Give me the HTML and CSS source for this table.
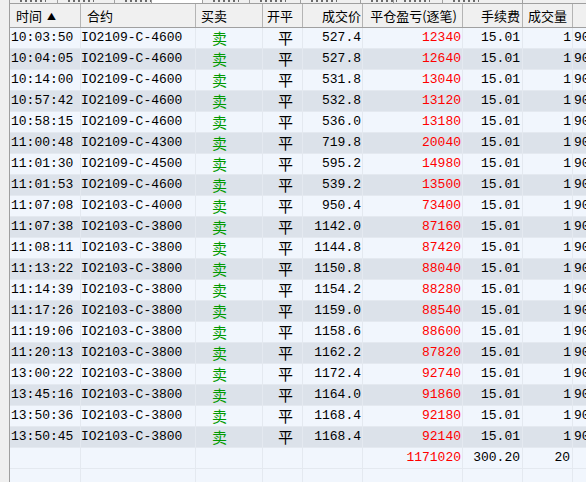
FILE: index.html
```html
<!DOCTYPE html>
<html lang="zh">
<head>
<meta charset="utf-8">
<title>成交</title>
<link rel="stylesheet" href="styles.css">
</head>
<body>
<div class="app">
  <div class="side"></div>
  <div class="main">
    <div class="tabs">
      <span class="tab w48"></span>
      <span class="tab w57"></span>
      <span class="tab w37"></span>
      <span class="tab w51 sel"></span>
      <span class="tab w47"></span>
      <span class="tab w51"></span>
      <span class="tab w60"></span>
      <span class="tab w33"></span>
      <span class="tab w49"></span>
      <span class="tab w80"></span>
    </div>
    <div class="grid">
      <div class="row head">
        <div class="c l p6">时间 <span class="sort">▲</span></div>
        <div class="c l p6">合约</div>
        <div class="c l p5">买卖</div>
        <div class="c l p4">开平</div>
        <div class="c r p1">成交价</div>
        <div class="c r p5">平仓盈亏(逐笔)</div>
        <div class="c r p2">手续费</div>
        <div class="c r p5">成交量</div>
        <div class="c l"></div>
      </div>

      <div class="row odd"><div class="c t">10:03:50</div><div class="c k">IO2109-C-4600</div><div class="c bs">卖</div><div class="c oc">平</div><div class="c n">527.4</div><div class="c n red">12340</div><div class="c n fee">15.01</div><div class="c n">1</div><div class="c x">9021</div></div>
      <div class="row even"><div class="c t">10:04:05</div><div class="c k">IO2109-C-4600</div><div class="c bs">卖</div><div class="c oc">平</div><div class="c n">527.8</div><div class="c n red">12640</div><div class="c n fee">15.01</div><div class="c n">1</div><div class="c x">9021</div></div>
      <div class="row odd"><div class="c t">10:14:00</div><div class="c k">IO2109-C-4600</div><div class="c bs">卖</div><div class="c oc">平</div><div class="c n">531.8</div><div class="c n red">13040</div><div class="c n fee">15.01</div><div class="c n">1</div><div class="c x">9021</div></div>
      <div class="row even"><div class="c t">10:57:42</div><div class="c k">IO2109-C-4600</div><div class="c bs">卖</div><div class="c oc">平</div><div class="c n">532.8</div><div class="c n red">13120</div><div class="c n fee">15.01</div><div class="c n">1</div><div class="c x">9021</div></div>
      <div class="row odd"><div class="c t">10:58:15</div><div class="c k">IO2109-C-4600</div><div class="c bs">卖</div><div class="c oc">平</div><div class="c n">536.0</div><div class="c n red">13180</div><div class="c n fee">15.01</div><div class="c n">1</div><div class="c x">9021</div></div>
      <div class="row even"><div class="c t">11:00:48</div><div class="c k">IO2109-C-4300</div><div class="c bs">卖</div><div class="c oc">平</div><div class="c n">719.8</div><div class="c n red">20040</div><div class="c n fee">15.01</div><div class="c n">1</div><div class="c x">9021</div></div>
      <div class="row odd"><div class="c t">11:01:30</div><div class="c k">IO2109-C-4500</div><div class="c bs">卖</div><div class="c oc">平</div><div class="c n">595.2</div><div class="c n red">14980</div><div class="c n fee">15.01</div><div class="c n">1</div><div class="c x">9021</div></div>
      <div class="row even"><div class="c t">11:01:53</div><div class="c k">IO2109-C-4600</div><div class="c bs">卖</div><div class="c oc">平</div><div class="c n">539.2</div><div class="c n red">13500</div><div class="c n fee">15.01</div><div class="c n">1</div><div class="c x">9021</div></div>
      <div class="row odd"><div class="c t">11:07:08</div><div class="c k">IO2103-C-4000</div><div class="c bs">卖</div><div class="c oc">平</div><div class="c n">950.4</div><div class="c n red">73400</div><div class="c n fee">15.01</div><div class="c n">1</div><div class="c x">9021</div></div>
      <div class="row even"><div class="c t">11:07:38</div><div class="c k">IO2103-C-3800</div><div class="c bs">卖</div><div class="c oc">平</div><div class="c n">1142.0</div><div class="c n red">87160</div><div class="c n fee">15.01</div><div class="c n">1</div><div class="c x">9021</div></div>
      <div class="row odd"><div class="c t">11:08:11</div><div class="c k">IO2103-C-3800</div><div class="c bs">卖</div><div class="c oc">平</div><div class="c n">1144.8</div><div class="c n red">87420</div><div class="c n fee">15.01</div><div class="c n">1</div><div class="c x">9021</div></div>
      <div class="row even"><div class="c t">11:13:22</div><div class="c k">IO2103-C-3800</div><div class="c bs">卖</div><div class="c oc">平</div><div class="c n">1150.8</div><div class="c n red">88040</div><div class="c n fee">15.01</div><div class="c n">1</div><div class="c x">9021</div></div>
      <div class="row odd"><div class="c t">11:14:39</div><div class="c k">IO2103-C-3800</div><div class="c bs">卖</div><div class="c oc">平</div><div class="c n">1154.2</div><div class="c n red">88280</div><div class="c n fee">15.01</div><div class="c n">1</div><div class="c x">9021</div></div>
      <div class="row even"><div class="c t">11:17:26</div><div class="c k">IO2103-C-3800</div><div class="c bs">卖</div><div class="c oc">平</div><div class="c n">1159.0</div><div class="c n red">88540</div><div class="c n fee">15.01</div><div class="c n">1</div><div class="c x">9021</div></div>
      <div class="row odd"><div class="c t">11:19:06</div><div class="c k">IO2103-C-3800</div><div class="c bs">卖</div><div class="c oc">平</div><div class="c n">1158.6</div><div class="c n red">88600</div><div class="c n fee">15.01</div><div class="c n">1</div><div class="c x">9021</div></div>
      <div class="row even"><div class="c t">11:20:13</div><div class="c k">IO2103-C-3800</div><div class="c bs">卖</div><div class="c oc">平</div><div class="c n">1162.2</div><div class="c n red">87820</div><div class="c n fee">15.01</div><div class="c n">1</div><div class="c x">9021</div></div>
      <div class="row odd"><div class="c t">13:00:22</div><div class="c k">IO2103-C-3800</div><div class="c bs">卖</div><div class="c oc">平</div><div class="c n">1172.4</div><div class="c n red">92740</div><div class="c n fee">15.01</div><div class="c n">1</div><div class="c x">9021</div></div>
      <div class="row even"><div class="c t">13:45:16</div><div class="c k">IO2103-C-3800</div><div class="c bs">卖</div><div class="c oc">平</div><div class="c n">1164.0</div><div class="c n red">91860</div><div class="c n fee">15.01</div><div class="c n">1</div><div class="c x">9021</div></div>
      <div class="row odd"><div class="c t">13:50:36</div><div class="c k">IO2103-C-3800</div><div class="c bs">卖</div><div class="c oc">平</div><div class="c n">1168.4</div><div class="c n red">92180</div><div class="c n fee">15.01</div><div class="c n">1</div><div class="c x">9021</div></div>
      <div class="row even"><div class="c t">13:50:45</div><div class="c k">IO2103-C-3800</div><div class="c bs">卖</div><div class="c oc">平</div><div class="c n">1168.4</div><div class="c n red">92140</div><div class="c n fee">15.01</div><div class="c n">1</div><div class="c x">9021</div></div>

      <div class="row total"><div class="c"></div><div class="c"></div><div class="c"></div><div class="c"></div><div class="c"></div><div class="c n red">1171020</div><div class="c n fee">300.20</div><div class="c n q">20</div><div class="c"></div></div>
      <div class="row total"><div class="c"></div><div class="c"></div><div class="c"></div><div class="c"></div><div class="c"></div><div class="c"></div><div class="c"></div><div class="c"></div><div class="c"></div></div>
    </div>
  </div>
</div>
</body>
</html>
```

FILE: styles.css
```css
html, body {
  margin: 0;
  padding: 0;
  width: 586px;
  height: 482px;
  overflow: hidden;
  background: #f0f0f0;
}

.app {
  display: flex;
  height: 482px;
}

.side {
  width: 9px;
  flex: none;
  background: #f0f0f0;
  border-right: 1px solid #a0a0a0;
}

.main {
  flex: 1;
  min-width: 0;
  overflow: hidden;
  background: #f1f6fd;
}

/* tab strip, only its bottom edge is visible */
.tabs {
  display: flex;
  height: 3px;
  overflow: hidden;
  background: #f0f0f0;
  border-bottom: 1px solid #a0a0a0;
}

.tab {
  flex: none;
  box-sizing: border-box;
  height: 3px;
  border-right: 1px solid #a0a0a0;
  position: relative;
}
.tab::before {
  content: "";
  position: absolute;
  left: 10px;
  top: 0;
  width: 26px;
  height: 2px;
  background: repeating-linear-gradient(90deg, #333 0 2px, transparent 2px 5px);
  opacity: 0.7;
}
.sel { background: #ffffff; }
.sel::before { display: none; }
.w48 { width: 48px; }
.w57 { width: 57px; }
.w37 { width: 37px; }
.w51 { width: 51px; }
.w47 { width: 47px; }
.w60 { width: 60px; }
.w33 { width: 33px; }
.w49 { width: 49px; }
.w80 { width: 80px; }

.grid {
  width: 643px;
}

.row {
  display: grid;
  grid-template-columns: 71px 115px 67px 40px 60px 100px 60px 50px 80px;
  height: 21px;
  box-sizing: border-box;
  border-bottom: 1px solid #e4e9f0;
}

.odd { background: #f1f6fd; }
.even { background: #dce2ea; }
.total { background: #f1f6fd; }

.c {
  box-sizing: border-box;
  border-right: 1px solid #e4e9f0;
  white-space: nowrap;
  overflow: hidden;
  font: 13px/20px "Liberation Mono", monospace;
  color: #000;
}

.head {
  height: 24px;
  background: #f0f0f0;
  border-bottom: 1px solid #a0a0a0;
}
.head .c {
  font: 13px/23px "Noto Sans CJK SC", sans-serif;
  color: #000;
  border-right: 1px solid #b4b4b4;
}
.head .l { text-align: left; }
.head .r { text-align: right; }
.head .p6 { padding-left: 6px; }
.head .p5.l { padding-left: 5px; }
.head .p4.l { padding-left: 4px; }
.head .p1.r { padding-right: 1px; }
.head .p2.r { padding-right: 2px; }
.head .p5.r { padding-right: 5px; }
.sort { font-size: 9px; vertical-align: 1px; margin-left: 2px; }

.t { padding-left: 1px; }
.k { padding-left: 0; }
.bs {
  font: 15px/20px "Noto Sans CJK SC", sans-serif;
  color: #009a00;
  padding-left: 16px;
}
.oc {
  font: 15px/20px "Noto Sans CJK SC", sans-serif;
  color: #000;
  padding-left: 15px;
}
.n { text-align: right; padding-right: 1px; }
.fee { padding-right: 2px; }
.q { padding-right: 2px; }
.red { color: #ff0000; }
.x { padding-left: 1px; }
```
